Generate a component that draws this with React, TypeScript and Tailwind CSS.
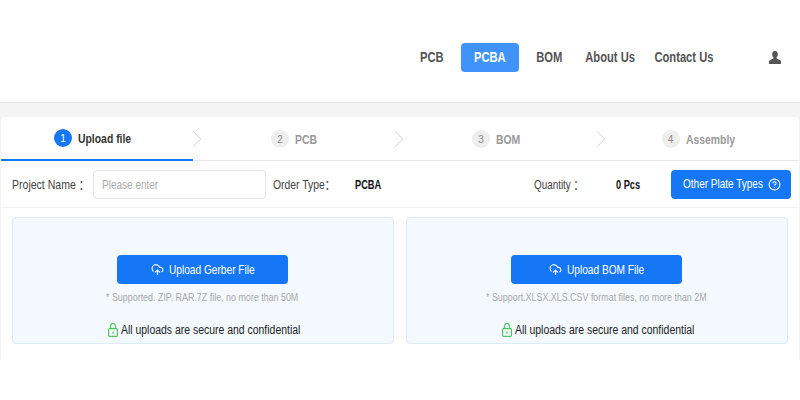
import { ChevronRight, CircleHelp, CloudUpload } from "lucide-react";

const navItems = [
  { name: "PCB", className: "w-[58px]" },
  { name: "PCBA", className: "w-[58px] h-[29px] rounded bg-[#3f93fb] text-white" },
  { name: "BOM", className: "w-[61px]" },
  { name: "About Us", className: "w-[60px]" },
  { name: "Contact Us", className: "w-[87px]" },
];

const steps = [
  { id: 1, name: "Upload file", cell: "w-[192px] pr-[9px]", text: "w-[53px]" },
  { id: 2, name: "PCB", cell: "w-[202px]", text: "w-[22px]" },
  { id: 3, name: "BOM", cell: "w-[202px]", text: "w-[24px]" },
  { id: 4, name: "Assembly", cell: "w-[202px]", text: "w-[49px]" },
];

function LockIcon() {
  return (
    <svg width="10" height="14" viewBox="0 0 10 14" fill="none" stroke="#4fc95f" strokeWidth="1.2" className="shrink-0">
      <rect x="0.6" y="5.6" width="8.8" height="7.8" rx="1" />
      <path d="M2.500 5.600V3a2.500 2.500 0 0 1 5 0v2.600M5 8.500v2" />
    </svg>
  );
}

function UserIcon() {
  return (
    <svg width="12" height="13" viewBox="0 0 12 13" fill="#555" className="ml-[42px] mt-[8px]">
      <path d="M6 0C4.300 0 3.200 1.200 3.200 3.200c0 1.300.5 2.400 1.200 3.100v1.100C3 8.200.6 8.700 0 10.200V13h12v-2.800c-.6-1.500-3-2-4.400-2.800V6.300c.7-.7 1.200-1.800 1.200-3.100C8.800 1.200 7.700 0 6 0z" />
    </svg>
  );
}

function UploadPanel({
  label,
  labelWidth,
  hint,
  hintWidth,
}: {
  label: string;
  labelWidth: string;
  hint: string;
  hintWidth: string;
}) {
  return (
    <div className="flex-1 h-[127px] flex flex-col items-center rounded-sm border border-[#dcebf7] bg-[#f3f9fe] pt-[37px] pr-px">
      <button className="w-[171px] h-[29px] flex items-center justify-center gap-[5px] rounded-sm bg-[#1677f6] text-[13px] text-white">
        <CloudUpload size={13} />
        <span className={`${labelWidth} whitespace-nowrap origin-left scale-x-[.78] text-left`}>{label}</span>
      </button>
      <p className={`${hintWidth} mt-[7px] whitespace-nowrap origin-left scale-x-[.89] text-[10px] leading-[14px] text-[#a8a8a8]`}>
        {hint}
      </p>
      <div className="mt-[16px] pl-[2px] flex items-center gap-[3px] text-[12px] leading-[18px] text-[#222]">
        <LockIcon />
        <span className="w-[178px] whitespace-nowrap origin-left scale-x-[.87]">All uploads are secure and confidential</span>
      </div>
    </div>
  );
}

export default function App() {
  return (
    <div className="w-[800px] h-[400px] bg-white font-['Liberation_Sans','Noto_Sans_CJK_SC',sans-serif] overflow-hidden">
      {/* Header */}
      <header className="h-[103px] flex items-start border-b border-[#e6e6e6] pt-[43px] pl-[403px]">
        <nav className="flex items-center h-[29px] text-[14px] font-bold text-[#555]">
          {navItems.map((item) => (
            <a key={item.name} className={`flex items-center justify-center ${item.className}`}>
              <span className="whitespace-nowrap scale-x-[.8]">{item.name}</span>
            </a>
          ))}
        </nav>
        <UserIcon />
      </header>

      <div className="h-[257px] bg-[#f4f4f4] pt-[14px]">
        {/* Card */}
        <section className="h-[243px] mx-px rounded-t bg-white">
          {/* Steps */}
          <div className="h-[44px] flex border-b border-[#e8e8e8]">
            {steps.map((step, i) => (
              <div
                key={step.id}
                className={`relative h-[44px] flex items-center justify-center gap-[6px] ${step.cell} ${
                  i === 0 ? "border-b-2 border-[#1677f6]" : ""
                }`}
              >
                <span
                  className={`w-[18px] h-[18px] flex items-center justify-center rounded-full text-[10px] ${
                    i === 0 ? "bg-[#1677f6] text-white" : "bg-[#eeeeee] text-[#888]"
                  }`}
                >
                  {step.id}
                </span>
                <span
                  className={`${step.text} pt-[2px] whitespace-nowrap origin-left scale-x-[.8] text-[13px] font-bold ${
                    i === 0 ? "text-[#333]" : "text-[#999]"
                  }`}
                >
                  {step.name}
                </span>
                {i < 3 && (
                  <ChevronRight
                    size={30}
                    strokeWidth={0.7}
                    className="absolute top-[7px] left-full -ml-[11px] text-[#c8c8c8]"
                  />
                )}
              </div>
            ))}
          </div>

          {/* Order row */}
          <div className="h-[47px] flex items-center border-b border-[#f2f2f2] pl-[11px] text-[13px] text-[#444]">
            <span className="w-[81px] pt-[2px] shrink-0 whitespace-nowrap origin-left scale-x-[.81]">Project Name ：</span>
            <div className="w-[173px] h-[29px] shrink-0 overflow-hidden rounded border border-[#e4e4e4] pl-[8px]">
              <input
                placeholder="Please enter"
                className="w-[200px] h-full origin-left scale-x-[.77] text-[13px] outline-none placeholder:text-[#aaa]"
              />
            </div>
            <span className="ml-[7px] w-[82px] pt-[2px] shrink-0 whitespace-nowrap origin-left scale-x-[.8]">Order Type：</span>
            <span className="w-[179px] pt-[2px] shrink-0 origin-left scale-x-[.71] font-bold text-[#111]">PCBA</span>
            <span className="w-[82px] pt-[2px] shrink-0 whitespace-nowrap origin-left scale-x-[.76]">Quantity ：</span>
            <span className="w-[55px] pt-[2px] shrink-0 whitespace-nowrap origin-left scale-x-[.71] font-bold text-[#111]">0 Pcs</span>
            <button className="w-[120px] h-[29px] shrink-0 flex items-center gap-[5px] rounded-sm bg-[#1677f6] pl-[12px] text-white">
              <span className="w-[80px] whitespace-nowrap origin-left scale-x-[.77] text-left">Other Plate Types</span>
              <CircleHelp size={13} />
            </button>
          </div>

          {/* Upload panels */}
          <div className="flex gap-[12px] pt-[9px] pl-[11px] pr-[11px]">
            <UploadPanel
              label="Upload Gerber File"
              labelWidth="w-[86px]"
              hint="* Supported. ZIP. RAR.7Z file, no more than 50M"
              hintWidth="w-[193px]"
            />
            <UploadPanel
              label="Upload BOM File"
              labelWidth="w-[78px]"
              hint="* Support.XLSX.XLS.CSV format files, no more than 2M"
              hintWidth="w-[221px]"
            />
          </div>
        </section>
      </div>
    </div>
  );
}
